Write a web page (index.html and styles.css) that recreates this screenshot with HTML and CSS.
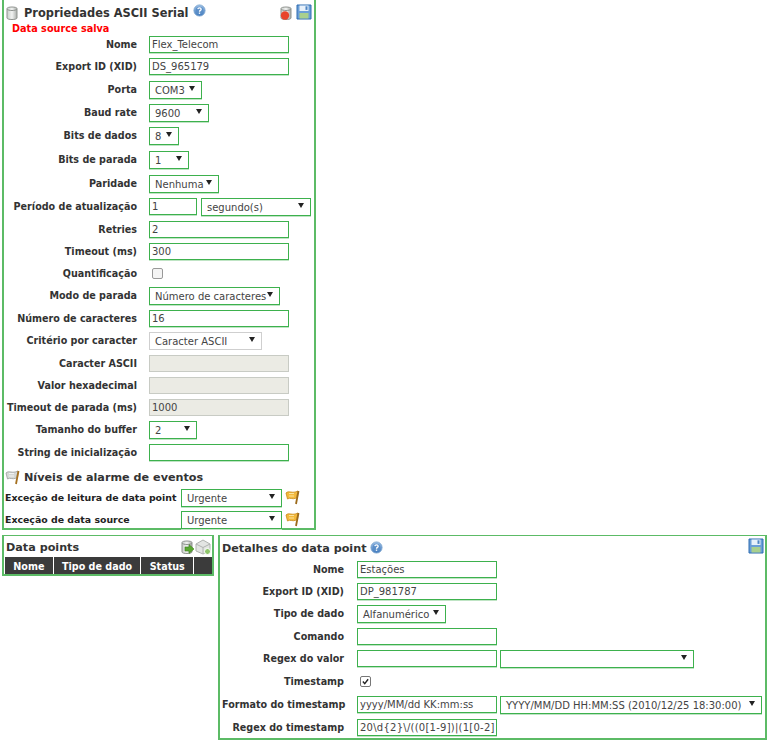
FILE: index.html
```html
<!DOCTYPE html>
<html lang="pt">
<head>
<meta charset="utf-8">
<title>Propriedades ASCII Serial</title>
<link rel="stylesheet" href="styles.css">
</head>
<body>
<svg class="defs" width="0" height="0">
  <defs>
    <linearGradient id="db" x1="0" x2="1" y1="0" y2="0"><stop offset="0" stop-color="#c9cdc9"/><stop offset=".5" stop-color="#f2f3f2"/><stop offset="1" stop-color="#a9ada9"/></linearGradient>
    <linearGradient id="blue" x1="0" x2="0" y1="0" y2="1"><stop offset="0" stop-color="#9cc0e6"/><stop offset="1" stop-color="#3d78bd"/></linearGradient>
    <symbol id="i-db" viewBox="0 0 16 16"><path d="M3 3.5C3 1.5 13 1.5 13 3.5V13C13 15 3 15 3 13Z" fill="url(#db)" stroke="#8f938f"/><path d="M3 4C4 6 12 6 13 4" fill="none" stroke="#8f938f"/></symbol>
    <symbol id="i-help" viewBox="0 0 14 14"><circle cx="7" cy="7" r="6" fill="url(#blue)" stroke="#7ea6cf"/><circle cx="7" cy="7" r="4" fill="#5b8ec8"/><path d="M5.2 5.5C5.4 3.7 8.8 3.7 8.8 5.6C8.8 7 7 6.8 7 8.3" fill="none" stroke="#fff" stroke-width="1.4"/><rect x="6.3" y="9.2" width="1.4" height="1.4" fill="#fff"/></symbol>
    <symbol id="i-save" viewBox="0 0 16 16"><path d="M1 1H15V15H1Z" fill="#6b9fd8" stroke="#2f6cb0"/><rect x="3.5" y="1.5" width="9" height="5.5" fill="#e8f1fa"/><rect x="9.5" y="2.3" width="2" height="3.6" fill="#4f86c4"/><rect x="3.5" y="9" width="9" height="5.5" fill="#a9d08e"/></symbol>
    <symbol id="i-flag" viewBox="0 0 16 16"><path d="M1 4C4 1 7 5 13 2L11.5 9C7 11 5 8 2.5 10Z" fill="#f3b93c" stroke="#c98a1a" stroke-width=".8"/><path d="M4 4.5L9 4.5M4 7H9" stroke="#fbe39c"/><path d="M13.5 2L11 15" stroke="#9c6a1a" stroke-width="1.8"/></symbol>
    <symbol id="i-flag-grey" viewBox="0 0 16 16"><path d="M1 4C4 1 7 5 13 2L11.5 9C7 11 5 8 2.5 10Z" fill="#d5d8d5" stroke="#9a9d9a" stroke-width=".8"/><path d="M4 4.5L9 4.5M4 7H9" stroke="#f2f2f2"/><path d="M13.5 2L11 15" stroke="#a5701f" stroke-width="1.8"/></symbol>
  </defs>
</svg>

<main class="page">
  <section class="panel source">
    <header class="head">
      <svg class="ic16 title-ic"><use href="#i-db"/></svg>
      <h1 class="title title-main">Propriedades ASCII Serial</h1>
      <svg class="ic14 help"><use href="#i-help"/></svg>
      <span class="spacer"></span>
      <svg class="ic16" viewBox="0 0 16 16"><use href="#i-db"/><circle cx="7" cy="10.5" r="4.2" fill="#e8452c"/></svg>
      <svg class="ic16 save-ic"><use href="#i-save"/></svg>
    </header>
    <p class="msg">Data source salva</p>

    <div class="row ti"><label class="lb">Nome</label><span class="in w140">Flex_Telecom</span></div>
    <div class="row ts"><label class="lb">Export ID (XID)</label><span class="in w140">DS_965179</span></div>
    <div class="row ts"><label class="lb">Porta</label><span class="sel w53">COM3</span></div>
    <div class="row ts"><label class="lb">Baud rate</label><span class="sel w60">9600</span></div>
    <div class="row tl"><label class="lb">Bits de dados</label><span class="sel w30">8</span></div>
    <div class="row tl"><label class="lb">Bits de parada</label><span class="sel w40">1</span></div>
    <div class="row ts"><label class="lb">Paridade</label><span class="sel w70">Nenhuma</span></div>
    <div class="row ts"><label class="lb">Período de atualização</label><span class="in w48">1</span><span class="sel w110">segundo(s)</span></div>
    <div class="row ti"><label class="lb">Retries</label><span class="in w140">2</span></div>
    <div class="row ti"><label class="lb">Timeout (ms)</label><span class="in w140">300</span></div>
    <div class="row tc"><label class="lb">Quantificação</label><span class="check"></span></div>
    <div class="row ts"><label class="lb">Modo de parada</label><span class="sel w131">Número de caracteres</span></div>
    <div class="row ti"><label class="lb">Número de caracteres</label><span class="in w140">16</span></div>
    <div class="row ts"><label class="lb">Critério por caracter</label><span class="sel w113 grey">Caracter ASCII</span></div>
    <div class="row ti"><label class="lb">Caracter ASCII</label><span class="in w140 off"></span></div>
    <div class="row ti"><label class="lb">Valor hexadecimal</label><span class="in w140 off"></span></div>
    <div class="row ti"><label class="lb">Timeout de parada (ms)</label><span class="in w140 off">1000</span></div>
    <div class="row tn"><label class="lb">Tamanho do buffer</label><span class="sel w48">2</span></div>
    <div class="row ti"><label class="lb">String de inicialização</label><span class="in w140"></span></div>

    <div class="alarm-head">
      <svg class="ic16"><use href="#i-flag-grey"/></svg>
      <h2 class="title">Níveis de alarme de eventos</h2>
    </div>
    <div class="alarm"><label class="lb-al">Exceção de leitura de data point</label><span class="sel w101">Urgente</span><svg class="ic16"><use href="#i-flag"/></svg></div>
    <div class="alarm"><label class="lb-al">Exceção de data source</label><span class="sel w101">Urgente</span><svg class="ic16"><use href="#i-flag"/></svg></div>
  </section>

  <div class="lower">
    <section class="panel points">
      <header class="head-points">
        <h2 class="title">Data points</h2>
        <span class="spacer"></span>
        <svg class="ic16" viewBox="0 0 16 16"><use href="#i-db"/><path d="M6 8H10V5.5L15 10L10 14.5V12H6Z" fill="#5aa832" stroke="#3e7d1f" stroke-width=".6"/></svg>
        <svg class="ic16" viewBox="0 0 16 16"><path d="M1 5L8 1L15 5V12L8 15L1 12Z" fill="#e3e5e3" stroke="#b0b3b0"/><path d="M1 5L8 8.5L15 5M8 8.5V15" fill="none" stroke="#b0b3b0"/><circle cx="12.5" cy="12.5" r="3" fill="#8ec56b" stroke="#fff"/></svg>
      </header>
      <div class="thead">
        <span class="th c1">Nome</span>
        <span class="th c2">Tipo de dado</span>
        <span class="th c3">Status</span>
        <span class="th c4"></span>
      </div>
    </section>

    <section class="panel detail">
      <header class="head-detail">
        <h2 class="title">Detalhes do data point</h2>
        <svg class="ic14 help"><use href="#i-help"/></svg>
        <span class="spacer"></span>
        <svg class="ic16 save-detail"><use href="#i-save"/></svg>
      </header>
      <div class="row2 ti"><label class="lb">Nome</label><span class="in w140">Estações</span></div>
      <div class="row2 ti"><label class="lb">Export ID (XID)</label><span class="in w140">DP_981787</span></div>
      <div class="row2 ts"><label class="lb">Tipo de dado</label><span class="sel w89">Alfanumérico</span></div>
      <div class="row2 ti"><label class="lb">Comando</label><span class="in w140"></span></div>
      <div class="row2 ts"><label class="lb">Regex do valor</label><span class="in w140"></span><span class="sel w193"></span></div>
      <div class="row2 tc"><label class="lb">Timestamp</label><span class="check on"><svg viewBox="0 0 12 12"><path d="M2.5 6L5 9L9.5 3" fill="none" stroke="#222" stroke-width="1.8"/></svg></span></div>
      <div class="row2 ts"><label class="lb">Formato do timestamp</label><span class="in w140">yyyy/MM/dd KK:mm:ss</span><span class="sel w262">YYYY/MM/DD HH:MM:SS (2010/12/25 18:30:00)</span></div>
      <div class="row2 ti"><label class="lb">Regex do timestamp</label><span class="in w140 rx">20\d{2}\/((0[1-9])|(1[0-2]</span></div>
    </section>
  </div>
</main>
</body>
</html>
```
FILE: styles.css
```css
* { box-sizing: border-box; }
html, body { margin: 0; padding: 0; background: #fff; }
body { font: 10px "DejaVu Sans", Verdana, sans-serif; color: #333; overflow: hidden; height: 750px; }
.defs { position: absolute; }
.page { width: 769px; padding: 0 0 0 2px; display: flex; flex-direction: column; }

.panel { border: 2px solid #5cbb66; border-top-width: 1px; background: #fff; }
.source { width: 314px; height: 530px; padding: 2px 0 0 0; border-width: 0 2px 2px 2px; }

.head { display: flex; align-items: center; height: 20px; padding-top: 2px; }
.title { margin: 0; font: bold 11.2px "DejaVu Sans", Verdana, sans-serif; color: #333; white-space: nowrap; }
.title-main { font-size: 11.4px; }
.spacer { flex: 1; }
.ic16 { width: 16px; height: 16px; flex: none; }
.ic14 { width: 13px; height: 13px; flex: none; }
.help { margin-left: 4px; margin-top: -5px; }
.title-ic { margin-right: 4px; margin-top: -1px; }
.save-ic { margin: -3px 2px 0 2px; }
.msg { margin: 0; padding-left: 8px; height: 14px; line-height: 14px; font-weight: bold; font-size: 9.7px; color: #f00; }

.row, .row2 { display: flex; align-items: flex-start; }
.ti { height: 22px; }
.ts { height: 23px; }
.tl { height: 24px; }
.tc { height: 22px; }
.tn { height: 23px; }
.row2.tc { height: 23px; }
.lb { width: 133px; margin-right: 12px; text-align: right; font-weight: bold; font-size: 9.6px; line-height: 17px; white-space: nowrap; color: #333; flex: none; }
.row2 .lb { width: 122px; margin-right: 13px; }

.in, .sel { display: block; height: 17px; line-height: 15px; border: 1px solid #3db14d; background: #fff; color: #444; padding: 0 2px; font-size: 10px; white-space: nowrap; overflow: hidden; flex: none; box-shadow: 0 1px 0 #bfe4c4; }
.sel { position: relative; height: 18px; line-height: 17px; padding-left: 5px; }
.sel::after { content: ""; position: absolute; right: 6px; top: 4px; border: 3px solid transparent; border-top: 5px solid #222; border-bottom: 0; }
.off { background: #ebebe4; border-color: #c8cbc4; box-shadow: none; }
.grey { border-color: #cfcfcf; box-shadow: none; }
.rx { letter-spacing: .25px; }
.in + .sel { margin-left: 4px; }
.row2 .in + .sel { margin-left: 3px; }

.w30 { width: 30px; } .w40 { width: 40px; } .w48 { width: 48px; } .w53 { width: 53px; }
.w60 { width: 60px; } .w70 { width: 70px; } .w89 { width: 89px; } .w101 { width: 101px; }
.w110 { width: 110px; } .w113 { width: 113px; } .w131 { width: 131px; } .w140 { width: 140px; }
.w193 { width: 194px; } .w262 { width: 262px; }

.check { display: block; width: 11px; height: 11px; margin: 3px 0 0 3px; border: 1px solid #999; border-radius: 2px; background: #f4f4f4; flex: none; }
.check.on { border-color: #777; background: #fff; }
.check svg { display: block; width: 9px; height: 9px; }

.alarm-head { display: flex; align-items: center; gap: 3px; height: 21px; margin-top: 2px; padding: 0 0 3px 1px; }
.alarm { display: flex; align-items: flex-start; height: 22px; padding-left: 1px; gap: 3px; }
.lb-al { width: 172px; margin-right: 1px; font-weight: bold; font-size: 9.4px; line-height: 17px; white-space: nowrap; color: #222; }

.lower { display: flex; gap: 4px; margin-top: 5px; align-items: flex-start; }
.points { width: 212px; height: 41px; border-width: 1px 2px 2px 2px; }
.head-points { display: flex; align-items: center; height: 21px; padding: 1px 1px 0 2px; }
.thead { display: flex; height: 17px; gap: 1px; margin: 0 0 0 1px; }
.th { display: block; background: #3b3b3b; color: #fff; font-weight: bold; font-size: 9.6px; text-align: center; line-height: 19px; }
.c1 { width: 48px; } .c2 { width: 87px; } .c3 { width: 52px; } .c4 { width: 18px; }

.detail { width: 549px; height: 205px; padding: 3px 0 0 2px; border-width: 1px 2px 2px 2px; }
.head-detail { display: flex; align-items: flex-start; height: 22px; padding: 2px 1px 0 0; }
.head-detail .title { margin-top: 1px; }
.detail .help { margin: 0 0 0 3px; }
.save-detail { margin-top: -3px; }
```
